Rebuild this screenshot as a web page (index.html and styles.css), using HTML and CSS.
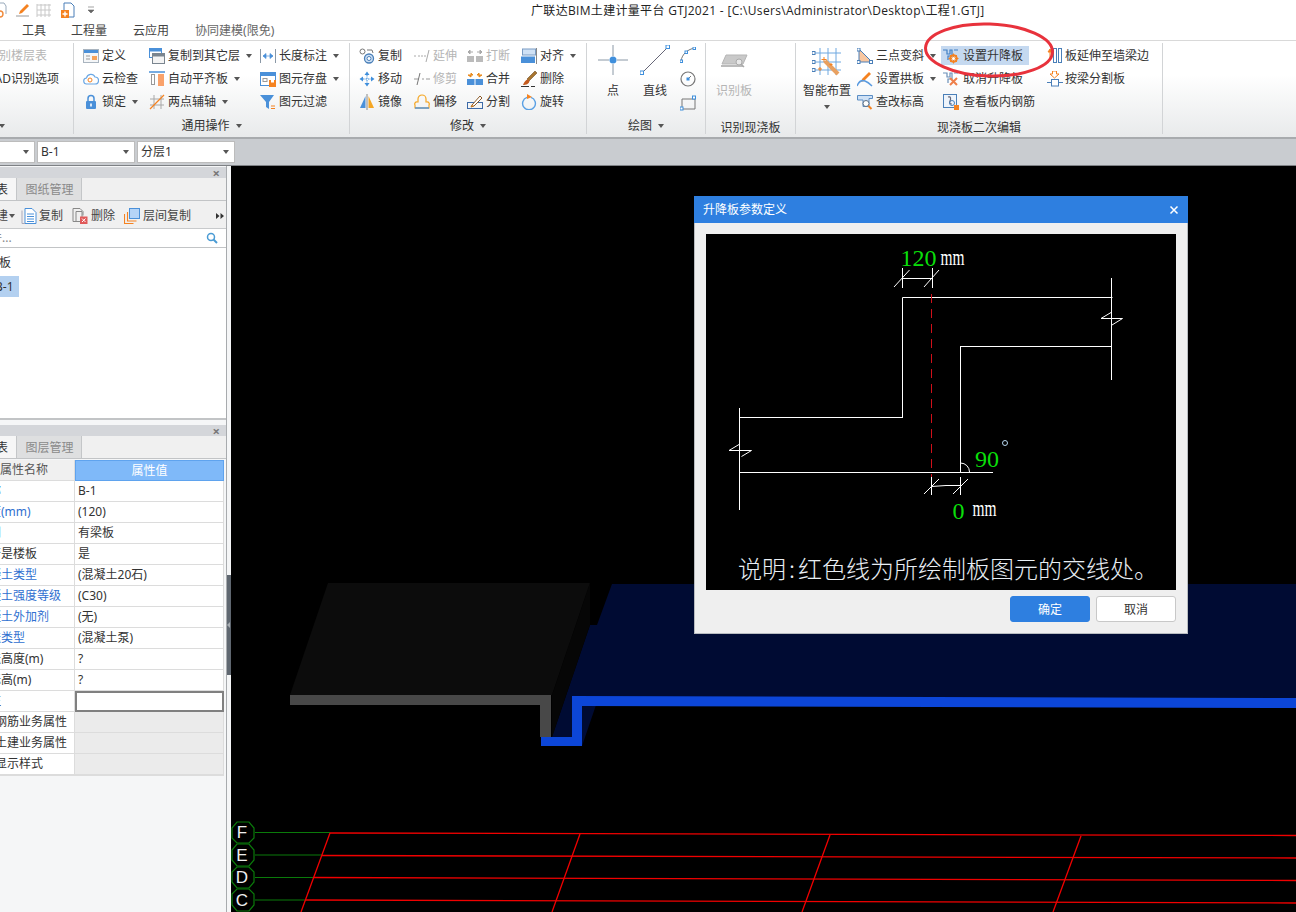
FILE: index.html
```html
<!DOCTYPE html>
<html lang="zh-CN">
<head>
<meta charset="utf-8">
<title>广联达BIM土建计量平台 GTJ2021</title>
<link rel="stylesheet" href="styles.css">
</head>
<body>
<div class="app">
  <header class="titlebar">
    <div class="quick">
      <svg class="qi qi-a" viewBox="0 0 8 16"><path d="M-3 1h7l2 3v8" fill="none" stroke="#9ab"/><circle cx="0" cy="12" r="3" fill="none" stroke="#f08a3c" stroke-width="1.4"/></svg>
      <svg class="qi" viewBox="0 0 16 16"><path d="M5 9 12 2l2 2-7 7-3 1z" fill="#f58220"/><path d="M1 14h13" stroke="#999"/></svg>
      <svg class="qi qi-w" viewBox="0 0 16 16"><path d="M1 2v13M5 2v13M9 2v13M13 2v13M1 3h14M1 8h14M1 13h14" stroke="#c8c8c8" fill="none"/></svg>
      <svg class="qi" viewBox="0 0 16 16"><path d="M4 1h7l3 3v11H4z" fill="#fff" stroke="#4a7fb8"/><rect x="1" y="8" width="8" height="8" fill="#f58220"/><path d="M5 9.5v5M2.5 12h5" stroke="#fff" stroke-width="1.4"/></svg>
      <svg class="qi qi-m" viewBox="0 0 8 8"><path d="M1 1h6M1 4h6l-3 3z" fill="#666" stroke="#666" stroke-width=".6"/></svg>
    </div>
    <div class="apptitle">广联达BIM土建计量平台 GTJ2021 - [C:\Users\Administrator\Desktop\工程1.GTJ]</div>
  </header>
  <nav class="menubar">
    <span class="menu m1">工具</span><span class="menu m2">工程量</span><span class="menu m3">云应用</span><span class="menu m4">协同建模(限免)</span>
  </nav>

  <div class="ribbon">
    <section class="group g1">
      <div class="tools col-list">
        <div class="item off">识别楼层表</div>
        <div class="item">CAD识别选项</div>
      </div>
      <div class="glabel">CAD操作<i class="caret"></i></div>
    </section>

    <section class="group g2">
      <div class="tools">
        <div class="col w66">
          <div class="item"><svg class="ic" viewBox="0 0 16 16"><rect x=".5" y="1.5" width="15" height="13" fill="#f4f6f8" stroke="#a9b4bf"/><rect x="1" y="2" width="14" height="3" fill="#4a90d9"/><path d="M3 8h4M3 11h4" stroke="#999"/><rect x="9" y="8" width="5" height="4" fill="#f5a35c"/></svg>定义</div>
          <div class="item"><svg class="ic" viewBox="0 0 16 16"><path d="M4 13a3 3 0 0 1-.5-6A4.500 4.500 0 0 1 12 6a3.500 3.500 0 0 1 0 7z" fill="none" stroke="#6aa7e4" stroke-width="1.200"/><circle cx="7" cy="9" r="2" fill="#fff" stroke="#f58220"/></svg>云检查</div>
          <div class="item"><svg class="ic" viewBox="0 0 16 16"><path d="M5 7V4.500a3 3 0 0 1 6 0V7" fill="none" stroke="#4a90d9" stroke-width="1.500"/><rect x="3" y="7" width="10" height="8" rx="1" fill="#4a90d9"/><rect x="7.200" y="9.500" width="1.600" height="3" fill="#fff"/></svg>锁定<i class="caret"></i></div>
        </div>
        <div class="col w111">
          <div class="item"><svg class="ic" viewBox="0 0 16 16"><rect x=".5" y=".5" width="12" height="9" fill="#fff" stroke="#4a90d9"/><rect x="1" y="1" width="11" height="2.500" fill="#4a90d9"/><rect x="3.500" y="5.500" width="12" height="10" fill="#f4f4f4" stroke="#7a858f"/><rect x="4" y="6" width="11" height="2.500" fill="#7a858f"/></svg>复制到其它层<i class="caret"></i></div>
          <div class="item"><svg class="ic" viewBox="0 0 16 16"><path d="M0 1h16" stroke="#4a90d9" stroke-width="1.500"/><rect x="2.500" y="3.500" width="3" height="10" fill="#fff" stroke="#999"/><rect x="9" y="3" width="6" height="12" fill="#f9a26b"/></svg>自动平齐板<i class="caret"></i></div>
          <div class="item"><svg class="ic" viewBox="0 0 16 16"><path d="M5 1v14M12 1v14M1 5h14M1 11h14" stroke="#a8a8a8" fill="none"/><path d="M1 15 15 1" stroke="#f58220" stroke-width="1.200"/></svg>两点辅轴<i class="caret"></i></div>
        </div>
        <div class="col">
          <div class="item"><svg class="ic" viewBox="0 0 16 16"><path d="M.5 1v14M15.500 1v14" stroke="#8a98a6"/><path d="M3 8h10M3 8l3-2.500v5zM13 8l-3-2.500v5z" fill="#4a90d9" stroke="#4a90d9" stroke-width=".7"/></svg>长度标注<i class="caret"></i></div>
          <div class="item"><svg class="ic" viewBox="0 0 16 16"><rect x=".5" y="1.500" width="15" height="13" fill="#fff" stroke="#4a90d9"/><rect x="1" y="2" width="14" height="3" fill="#4a90d9"/><rect x="3" y="7.500" width="4" height="3" fill="none" stroke="#999"/><rect x="9" y="9" width="7" height="7" fill="#f58220"/><rect x="11" y="9" width="3" height="2.500" fill="#fff"/></svg>图元存盘<i class="caret"></i></div>
          <div class="item"><svg class="ic" viewBox="0 0 16 16"><path d="M0 1h14L9 8v7L6 13V8z" fill="#4a90d9"/><path d="M11 12h4M11 14.500h4" stroke="#f58220"/></svg>图元过滤</div>
        </div>
      </div>
      <div class="glabel">通用操作<i class="caret"></i></div>
    </section>

    <section class="group g3">
      <div class="tools">
        <div class="col w55">
          <div class="item"><svg class="ic" viewBox="0 0 16 16"><circle cx="3.500" cy="3.500" r="2.500" fill="none" stroke="#777"/><circle cx="10" cy="10.500" r="4.500" fill="#cfe1f5" stroke="#4a7fb8" stroke-width="1.300"/><circle cx="10" cy="10.500" r="2" fill="#fff" stroke="#4a7fb8"/><path d="M8 2h5l1 3" fill="none" stroke="#777"/></svg>复制</div>
          <div class="item"><svg class="ic" viewBox="0 0 16 16"><path d="M8 .5 10.500 4h-5zM8 15.500 5.500 12h5zM.5 8 4 5.500v5zM15.500 8 12 5.500v5z" fill="#3f8fdc"/><path d="M8 4v8M4 8h8" stroke="#3f8fdc" stroke-dasharray="1.500 1"/></svg>移动</div>
          <div class="item"><svg class="ic" viewBox="0 0 16 16"><path d="M6.500 2v12H1z" fill="#4a90d9"/><path d="M9.500 2v12H15z" fill="#f5a623"/><path d="M8 0v16" stroke="#888"/></svg>镜像</div>
        </div>
        <div class="col w53">
          <div class="item off"><svg class="ic ic-off" viewBox="0 0 16 16"><path d="M0 8h2M4 8h2M7 8h2M10 8h2" stroke="#aaa"/><path d="M12 14 15 2" stroke="#aaa"/></svg>延伸</div>
          <div class="item off"><svg class="ic ic-off" viewBox="0 0 16 16"><path d="M0 8h5M8 8h2M12 8h2M14 8h2" stroke="#999"/><path d="M3 14 6 2" stroke="#777"/></svg>修剪</div>
          <div class="item"><svg class="ic" viewBox="0 0 16 16"><path d="M1 14v-3a2 2 0 0 1 2-3h1V5a4 4 0 0 1 8 0v3h1a2 2 0 0 1 2 3v3z" fill="none" stroke="#f5a623" stroke-width="1.200"/><path d="M1 14h14" stroke="#4a90d9" stroke-width="1.400"/></svg>偏移</div>
        </div>
        <div class="col w54">
          <div class="item off"><svg class="ic ic-off" viewBox="0 0 16 16"><rect x="0" y="8" width="7" height="6" fill="#bbb"/><rect x="9" y="8" width="7" height="6" fill="#bbb"/><path d="M1 4h5M15 4h-5M1 4l2-2v4zM15 4l-2-2v4z" fill="#aaa" stroke="#aaa"/></svg>打断</div>
          <div class="item"><svg class="ic" viewBox="0 0 16 16"><rect x="0" y="8" width="7.500" height="6" fill="#4a90d9"/><rect x="8.500" y="8" width="7.500" height="6" fill="#4a90d9"/><path d="M1 4h5l-2-2v4zM15 4h-5l2-2v4z" fill="#e8891a" stroke="#e8891a"/></svg>合并</div>
          <div class="item"><svg class="ic" viewBox="0 0 16 16"><rect x=".5" y="8.500" width="15" height="6" fill="none" stroke="#3c6aa8"/><path d="M5 11 13 2l2 2-8 8-3 1z" fill="#fff" stroke="#8a5a2a"/><path d="M4 13l3-1-2-1z" fill="#e8891a"/></svg>分割</div>
        </div>
        <div class="col">
          <div class="item"><svg class="ic" viewBox="0 0 16 16"><rect x="1.500" y="1" width="13" height="6" fill="#cfe1f5" stroke="#7a9cc4"/><rect x="0" y="8.500" width="14" height="6.500" fill="#4a90d9"/><path d="M15.500 0v16" stroke="#888"/></svg>对齐<i class="caret"></i></div>
          <div class="item"><svg class="ic" viewBox="0 0 16 16"><path d="M6 8 14 0l2 2-8 8z" fill="#a8742e" stroke="#5a3a12" stroke-width=".5"/><path d="M7 8.500 8.500 10C8 13 5 14 2 14c1-2 2-5 5-5.500z" fill="#c45a1e"/><path d="M0 15.500h8M10 15.500h4" stroke="#333"/></svg>删除</div>
          <div class="item"><svg class="ic" viewBox="0 0 16 16"><path d="M6 3.300A6.400 6.400 0 1 0 10 3.300" fill="none" stroke="#5aa0e4" stroke-width="1.400"/><path d="M6 0v5l5-2z" fill="#f58220"/></svg>旋转</div>
        </div>
      </div>
      <div class="glabel">修改<i class="caret"></i></div>
    </section>

    <section class="group g4">
      <div class="tools">
        <div class="big big-pt">
          <svg class="ic-big" viewBox="0 0 30 30"><path d="M15 0v11M15 19v11M0 15h11M19 15h11" stroke="#8a98a6"/><circle cx="15" cy="15" r="3.500" fill="#3f8fdc"/></svg>
          <span>点</span>
        </div>
        <div class="big big-ln">
          <svg class="ic-big" viewBox="0 0 30 30"><path d="M2 28 28 2" stroke="#667"/><rect x="0" y="26" width="3.500" height="3.500" fill="#fff" stroke="#3f8fdc"/><rect x="26" y="0" width="3.500" height="3.500" fill="#fff" stroke="#3f8fdc"/></svg>
          <span>直线</span>
        </div>
        <div class="minis">
          <svg class="ic" viewBox="0 0 16 16"><path d="M1 14C2 7 8 2 15 1" fill="none" stroke="#777"/><rect x="0" y="13" width="2.500" height="2.500" fill="#fff" stroke="#3f8fdc"/><rect x="5" y="4" width="2.500" height="2.500" fill="#fff" stroke="#3f8fdc"/><rect x="13" y="0" width="2.500" height="2.500" fill="#fff" stroke="#3f8fdc"/></svg>
          <svg class="ic" viewBox="0 0 16 16"><circle cx="8" cy="8" r="7" fill="none" stroke="#777" stroke-width="1.200"/><path d="M8 8l3-3" stroke="#777"/><rect x="6.500" y="6.500" width="3" height="3" fill="#3f8fdc"/></svg>
          <svg class="ic" viewBox="0 0 16 16"><path d="M2 4h13v10H2z" fill="none" stroke="#777"/><rect x="0" y="12" width="3" height="3" fill="#fff" stroke="#3f8fdc"/><rect x="12.500" y="1" width="3" height="3" fill="#fff" stroke="#3f8fdc"/></svg>
        </div>
      </div>
      <div class="glabel">绘图<i class="caret"></i></div>
    </section>

    <section class="group g5">
      <div class="tools">
        <div class="big big-id off">
          <svg class="ic-wide" viewBox="0 0 28 16"><path d="M6 1h21l-4 9H2z" fill="#c9c9c9" stroke="#b5b5b5"/><path d="M1 12h22" stroke="#bbb" stroke-width="2"/><circle cx="19" cy="8" r="3" fill="#e8e8e8" stroke="#aaa"/><path d="M21 10l3 3" stroke="#aaa" stroke-width="1.500"/></svg>
          <span>识别板</span>
        </div>
      </div>
      <div class="glabel glabel-low">识别现浇板</div>
    </section>

    <section class="group g6">
      <div class="tools">
        <div class="big big-sm">
          <svg class="ic-big ic-smart" viewBox="0 0 30 30"><path d="M8 1v27M16 1v27M24 1v27M1 6h28M1 15h28M1 23h28" stroke="#6fa8e0" fill="none"/><rect x="0" y="4.500" width="3" height="3" fill="#fff" stroke="#4a7fb8"/><rect x="0" y="13.500" width="3" height="3" fill="#fff" stroke="#4a7fb8"/><rect x="0" y="21.500" width="3" height="3" fill="#fff" stroke="#4a7fb8"/><path d="M13 14 26 27" stroke="#e8a060" stroke-width="4"/><path d="M12 10v5M9.500 12.500h5M8 20v4M6 22h4M19 16v3M17.500 17.500h3" stroke="#f58220"/></svg>
          <span>智能布置</span>
          <i class="caret caret-big"></i>
        </div>
        <div class="col w86">
          <div class="item"><svg class="ic" viewBox="0 0 16 16"><path d="M2 1v13h13z" fill="#f9c7a0" stroke="#4a7fb8"/><rect x="0" y="0" width="3" height="3" fill="#fff" stroke="#4a7fb8"/><rect x="0" y="12.500" width="3" height="3" fill="#fff" stroke="#4a7fb8"/><rect x="12.500" y="12.500" width="3" height="3" fill="#fff" stroke="#4a7fb8"/></svg>三点变斜<i class="caret"></i></div>
          <div class="item"><svg class="ic" viewBox="0 0 16 16"><path d="M5 8 12 1l2 2-7 7-3 1z" fill="#f58220"/><path d="M0 15c2-5 5-6 8-5s5 3 7 5" fill="none" stroke="#5a9be0" stroke-width="1.500"/></svg>设置拱板<i class="caret"></i></div>
          <div class="item"><svg class="ic" viewBox="0 0 16 16"><path d="M.5 1.500h15v3H12v8H6V6H.5z" fill="#cfe1f5" stroke="#5a8cc4"/><circle cx="9" cy="9.500" r="3" fill="#fff" stroke="#5a6e84"/><path d="M11.500 12l3 3" stroke="#f58220" stroke-width="2"/></svg>查改标高</div>
        </div>
        <div class="col w104">
          <div class="item item-on"><svg class="ic" viewBox="0 0 16 16"><path d="M0 2h4v4h3V2h2v6H5V12M11 2h4" fill="none" stroke="#3f7fc4" stroke-width="1.200"/><circle cx="10.500" cy="10.500" r="3.300" fill="none" stroke="#f58220" stroke-width="2"/><path d="M10.500 5.500v10M5.500 10.500h10M7 7l7 7M14 7l-7 7" stroke="#f58220"/><circle cx="10.500" cy="10.500" r="1.500" fill="#fff"/></svg>设置升降板</div>
          <div class="item"><svg class="ic" viewBox="0 0 16 16"><path d="M0 2h4v4h3V2h2v6H5V12M11 2h4" fill="none" stroke="#6a8fb8" stroke-width="1.200"/><path d="M7 7l7 7M14 7l-7 7" stroke="#ee7f4a" stroke-width="2"/></svg>取消升降板</div>
          <div class="item"><svg class="ic" viewBox="0 0 16 16"><rect x=".5" y=".5" width="13" height="13" fill="#eef4fb" stroke="#4a7fb8"/><path d="M5 3c3-1 3 2 2 4s0 3 2 3" fill="none" stroke="#667" stroke-width="1.200"/><circle cx="9" cy="9" r="2.500" fill="none" stroke="#4a7fb8"/><rect x="11" y="11" width="5" height="5" fill="#f58220"/></svg>查看板内钢筋</div>
        </div>
        <div class="col">
          <div class="item"><svg class="ic" viewBox="0 0 16 16"><rect x="6.500" y=".5" width="3" height="14" fill="#fff" stroke="#4a7fb8"/><rect x="11.500" y=".5" width="3" height="14" fill="#fff" stroke="#4a7fb8"/><path d="M3 10V2M1 4l2-3 2 3z" fill="#f58220" stroke="#f58220"/></svg>板延伸至墙梁边</div>
          <div class="item"><svg class="ic" viewBox="0 0 16 16"><path d="M5.500 0h4v3H12L7.500 7 3 3h2.500z" fill="#fff" stroke="#f58220"/><rect x="4.500" y="8.500" width="7" height="6.500" fill="#fff" stroke="#4a7fb8"/><path d="M0 11.500h4M12 11.500h4" stroke="#4a7fb8"/></svg>按梁分割板</div>
        </div>
      </div>
      <div class="glabel glabel-low">现浇板二次编辑</div>
    </section>

    <svg class="ring" viewBox="0 0 132 58"><ellipse cx="66" cy="29" rx="63.500" ry="26" fill="none" stroke="#e8323c" stroke-width="3" transform="rotate(2 66 29)"/></svg>
  </div>

  <div class="selectbar">
    <div class="sel sel-a"><i class="caret"></i></div>
    <div class="sel">B-1<i class="caret"></i></div>
    <div class="sel">分层1<i class="caret"></i></div>
  </div>

  <main class="work">
    <aside class="side">
      <div class="panel panel-top">
        <div class="phead"><span class="pclose">×</span></div>
        <div class="tabs"><span class="tab tab-on">构件列表</span><span class="tab">图纸管理</span></div>
        <div class="ptools">
          <span class="pt pt-new">新建<i class="caret"></i></span>
          <span class="pt pt-copy"><svg class="ic" viewBox="0 0 16 16"><path d="M4 .5h7l4 4v11H4z" fill="#fff" stroke="#4a90d9"/><path d="M1 2.500v13h3" fill="none" stroke="#aab"/><path d="M6 6h7M6 8.500h7M6 11h7M6 13.500h7" stroke="#4a90d9"/></svg>复制</span>
          <span class="pt pt-del"><svg class="ic" viewBox="0 0 16 16"><path d="M1 .5h7l3 3v4M1 .5v13h5" fill="none" stroke="#888"/><path d="M4 3.500h6v10H4z" fill="none" stroke="#888"/><rect x="8" y="8.500" width="7.500" height="7.500" fill="#e05a5a"/><path d="M10 10.500l3.500 3.500M13.500 10.500 10 14" stroke="#fff"/></svg>删除</span>
          <span class="pt pt-floor"><svg class="ic" viewBox="0 0 16 16"><rect x="5.500" y=".5" width="10" height="10" fill="#b5d4f7" stroke="#4a90d9"/><path d="M3.500 4v9h9M.5 6v9.500h9" fill="none" stroke="#f58220" stroke-width="1.100"/></svg>层间复制</span>
          <svg class="pmore" viewBox="0 0 8 6"><path d="M0 0 3.500 3 0 6zM4.500 0 8 3 4.500 6z" fill="#333"/></svg>
        </div>
        <div class="psearch"><span class="ph">搜索构件...</span><svg class="ic-s" viewBox="0 0 12 12"><circle cx="5" cy="5" r="3.500" fill="none" stroke="#4a9bd4" stroke-width="1.500"/><path d="M7.500 7.500 11 11" stroke="#4a9bd4" stroke-width="2"/></svg></div>
        <div class="plist">
          <div class="li">现浇板</div>
          <div class="li li-on">B-1</div>
        </div>
      </div>
      <div class="panel panel-bot">
        <div class="phead"><span class="pclose">×</span></div>
        <div class="tabs"><span class="tab tab-on">属性列表</span><span class="tab">图层管理</span></div>
        <div class="ptable">
          <div class="tr thead"><div class="name">属性名称</div><div class="val">属性值</div></div>
          <div class="tr"><div class="name link">名称</div><div class="val">B-1</div></div>
          <div class="tr"><div class="name link">厚度(mm)</div><div class="val">(120)</div></div>
          <div class="tr"><div class="name link">类别</div><div class="val">有梁板</div></div>
          <div class="tr"><div class="name">是否是楼板</div><div class="val">是</div></div>
          <div class="tr"><div class="name link">混凝土类型</div><div class="val">(混凝土20石)</div></div>
          <div class="tr"><div class="name link">混凝土强度等级</div><div class="val">(C30)</div></div>
          <div class="tr"><div class="name link">混凝土外加剂</div><div class="val">(无)</div></div>
          <div class="tr"><div class="name link">泵送类型</div><div class="val">(混凝土泵)</div></div>
          <div class="tr"><div class="name">泵送高度(m)</div><div class="val">?</div></div>
          <div class="tr"><div class="name">顶标高(m)</div><div class="val">?</div></div>
          <div class="tr"><div class="name">备注</div><div class="val val-edit"></div></div>
          <div class="tr"><div class="name name-sec">钢筋业务属性</div><div class="val val-sec"></div></div>
          <div class="tr"><div class="name name-sec">土建业务属性</div><div class="val val-sec"></div></div>
          <div class="tr"><div class="name name-sec">显示样式</div><div class="val val-sec"></div></div>
        </div>
      </div>
    </aside>
    <div class="splitter"><div class="grip"><i class="grip-arrow"></i></div></div>
    <div class="canvas">
      <svg class="scene" viewBox="231 166 1065 746">
        <polygon points="612,584 1296,584 1296,705 596,705 582,746 552,737 590,625 597,625" fill="#000b33"/>
        <polygon points="328,583 590,583 552,695 290,695" fill="#0c0c0c"/>
        <polygon points="590,583 590,625 552,737 552,695" fill="#060606"/>
        <polygon points="290,695 551,695 551,737 540,737 540,705 290,705" fill="#484848"/>
        <polygon points="541,737 572,737 572,696 1296,698 1296,708 582,706 582,746 541,746" fill="#0c46d8"/>
        <g class="grid-green">
          <path d="M255 832.500H330M255 855H322M255 877.500H313M255 900H305"/>
          <polygon points="237,822 249,822 254,828 254,838 249,843 237,843 232,838 232,828"/>
          <polygon points="237,844 249,844 254,850 254,860 249,866 237,866 232,860 232,850"/>
          <polygon points="237,867 249,867 254,872 254,882 249,888 237,888 232,882 232,872"/>
          <polygon points="237,889 249,889 254,894 254,905 249,911 237,911 232,905 232,894"/>
        </g>
        <g class="grid-red">
          <path d="M330 833 1296 835.500M322 855.500 1296 858M313 877.500 1296 880.500M305 900 1296 903"/>
          <path d="M330 833 301 912M580 834 552 912M830 835 802 912M1081 836 1053 912"/>
        </g>
        <g class="axis">
          <text x="242" y="838">F</text>
          <text x="242" y="861">E</text>
          <text x="242" y="883">D</text>
          <text x="242" y="906">C</text>
        </g>
      </svg>
      <div class="dialog">
        <div class="dlg-title"><span>升降板参数定义</span><svg class="dlg-x" viewBox="0 0 10 10"><path d="M1.500 1.500l7 7M8.500 1.500l-7 7" stroke="#fff" stroke-width="1.500"/></svg></div>
        <svg class="diagram" viewBox="0 0 470 356">
          <g class="lines">
            <path d="M196.500 63.500H406.500M196.500 63.500V184M33.500 183.500H196.500M33.500 174V276M33.500 238.500H287M254.500 112V238.500M254.500 112.500H406M405.500 44V146"/>
            <path d="M196.500 34V54M226.500 34V54M196.500 44.500H226.500M188 53 203.500 36M218 53 233 36"/>
            <path d="M225.500 243V261M254.500 243V261M225.500 252.500 240 251.500H254.500M218 260 233 245M247 260 262 245"/>
            <path d="M254.500 229A9 9 0 0 1 263.500 238"/>
            <path d="M405 78.500 395 84.500H416.500L406 91"/>
            <path d="M33 210.500 23 216.500H45.500L35.500 222.500"/>
          </g>
          <path class="redline" d="M225.500 60V243"/>
          <text class="dg dg-big" x="194.500" y="32">120</text>
          <text class="dg dg-mm" x="234.500" y="31" textLength="24" lengthAdjust="spacingAndGlyphs">mm</text>
          <text class="dg dg-big" x="269" y="233">90</text>
          <circle class="deg" cx="299" cy="209" r="2.500"/>
          <text class="dg dg-big" x="246.500" y="285">0</text>
          <text class="dg dg-mm" x="266.500" y="282" textLength="24" lengthAdjust="spacingAndGlyphs">mm</text>
          <text class="note" x="32" y="344">说明<tspan dx="3">:</tspan><tspan dx="3">红色线为所绘制板图元的交线处。</tspan></text>
        </svg>
        <div class="dlg-foot">
          <button class="btn btn-ok" type="button">确定</button>
          <button class="btn" type="button">取消</button>
        </div>
      </div>
    </div>
  </main>
</div>
</body>
</html>
```
FILE: styles.css
```css
* { box-sizing: border-box; }
html, body { margin: 0; padding: 0; }
body {
  width: 1296px;
  height: 912px;
  overflow: hidden;
  font-family: "Noto Sans", "Noto Sans CJK SC", sans-serif;
  font-size: 12px;
  line-height: 16px;
  color: #333;
  background: #fff;
}
.app { display: flex; flex-direction: column; width: 1296px; height: 912px; overflow: hidden; }

/* title */
.titlebar { height: 19px; display: flex; background: #fff; flex: none; }
.quick { display: flex; align-items: center; width: 260px; }
.qi { width: 16px; height: 16px; display: block; margin-right: 5px; }
.qi-a { width: 8px; margin-right: 7px; }
.qi-w { margin-right: 8px; }
.qi-m { width: 8px; height: 8px; margin-left: 6px; }
.apptitle { margin-left: 271px; white-space: nowrap; color: #222; line-height: 20px; font-size: 12px; letter-spacing: .32px; font-family: "Open Sans", "Noto Sans CJK SC", sans-serif; padding-top: 1px; }

/* menu */
.menubar { height: 22px; display: flex; align-items: center; padding-top: 3px; background: #fff; border-bottom: 1px solid #d9d9d9; flex: none; color: #444; }
.menu { white-space: nowrap; }
.m1 { margin-left: 22px; }
.m2 { margin-left: 25px; }
.m3 { margin-left: 26px; }
.m4 { margin-left: 26px; color: #666; }

/* ribbon */
.ribbon {
  position: relative;
  height: 98px;
  flex: none;
  display: flex;
  padding: 2px 0 3px;
  background: linear-gradient(#fff 35%, #e8eaeb);
  border-bottom: 2px solid #a8abae;
}
.group { display: flex; flex-direction: column; flex: none; border-right: 1px solid #d2d4d6; }
.tools { flex: 1; display: flex; padding-top: 1px; min-height: 0; }
.glabel { height: 24px; margin-bottom: -4px; display: flex; flex: none; justify-content: center; align-items: center; white-space: nowrap; color: #333; }
.glabel-low { padding-top: 4px; }
.col-list { flex-direction: column; }
.col { display: flex; flex-direction: column; flex: none; }
.item { height: 23px; display: flex; align-items: center; white-space: nowrap; flex: none; }
.off { color: #b5b5b5; }
.ic { width: 16px; height: 16px; display: block; margin-right: 3px; flex: none; }
.caret { display: inline-block; width: 0; height: 0; border: 3px solid transparent; border-top: 4px solid #555; border-bottom: 0; margin-left: 6px; flex: none; }

.g1 { width: 197px; margin-left: -123px; }
.g1 .tools { padding-left: 110px; }
.g2 { width: 276px; }
.g2 .tools { padding-left: 9px; }
.g3 { width: 237px; }
.g3 .tools { padding-left: 9px; }
.g4 { width: 119px; }
.g5 { width: 90px; }
.g6 { width: 367px; }
.g6 .tools { padding-left: 7px; }
.w53 { width: 53px; }
.w54 { width: 54px; }
.w55 { width: 55px; }
.w66 { width: 66px; }
.w86 { width: 86px; }
.w104 { width: 104px; }
.w111 { width: 111px; }

.big { display: flex; flex-direction: column; align-items: center; flex: none; padding-top: 1px; }
.big span { white-space: nowrap; margin-top: 8px; line-height: 16px; }
.big-id span { margin-top: 4px; }
.ic-big { width: 30px; height: 30px; display: block; flex: none; }
.ic-wide { width: 28px; height: 16px; display: block; margin-top: 9px; margin-bottom: 9px; flex: none; }
.big-pt { width: 30px; margin-left: 11px; }
.big-ln { width: 30px; margin-left: 12px; }
.minis { display: flex; flex-direction: column; gap: 8px; margin: 3px 0 0 10px; }
.minis .ic { margin: 0; }
.big-id { margin-left: 10px; }
.big-sm { width: 54px; padding-right: 6px; }
.ic-smart { margin-top: 2px; }
.big-sm span { margin-top: 6px; }
.caret-big { margin: 6px 0 0; }
.item-on { background: #c5d9f0; margin-left: -2px; padding-left: 2px; width: 88px; height: 19px; margin-top: 2px; margin-bottom: 2px; }
.item-on .ic { margin-right: 4px; }
.w104 .item:not(.item-on) .ic { margin-right: 4px; }
.g6 .col:last-child .ic { margin-right: 2px; }
.ring { position: absolute; left: 923px; top: -20px; width: 132px; height: 58px; pointer-events: none; overflow: visible; }

/* select row */
.selectbar { height: 27px; flex: none; display: flex; gap: 2px; padding: 2px 0 0; background: #c9ccd0; border-bottom: 1px solid #7e8185; }
.sel { width: 98px; height: 22px; background: #fff; border: 1px solid #bcbcbc; display: flex; align-items: center; justify-content: space-between; padding: 0 5px 0 3px; color: #333; flex: none; }
.sel-a { margin-left: -63px; justify-content: flex-end; }

/* workspace */
.work { flex: 1; min-height: 0; display: flex; }
.side { width: 227px; flex: none; overflow: hidden; background: #f5f6f7; display: flex; flex-direction: column; border-right: 1px solid #a8abae; }
.panel { flex: none; margin-left: -64px; width: 290px; display: flex; flex-direction: column; }
.panel-top { height: 254px; padding-top: 1px; }
.panel-bot { margin-top: 5px; }
.phead { height: 11px; flex: none; background: #d4d6da; display: flex; justify-content: flex-end; align-items: center; padding-right: 6px; }
.pclose { font-size: 13px; line-height: 10px; color: #777; font-weight: 700; }
.tabs { height: 23px; flex: none; display: flex; background: #f0f0f0; border-bottom: 1px solid #c2c4c6; }
.tab { width: 65px; padding-left: 1px; text-align: center; line-height: 23px; color: #8a8a8a; background: #dedfe0; border-right: 1px solid #c4c6c8; white-space: nowrap; }
.tab-on { width: 81px; padding: 0 8px 0 24px; text-align: left; background: #f6f6f6; color: #333; border-right: 1px solid #c4c6c8; }
.ptools { height: 28px; flex: none; display: flex; align-items: center; padding-top: 2px; background: #f0f0f0; border-bottom: 1px solid #c8cacc; color: #444; }
.pt { display: flex; align-items: center; white-space: nowrap; flex: none; }
.pt .ic { margin-right: 3px; }
.pt-new { width: 85px; padding-left: 48px; }
.pt-new .caret { margin-left: 1px; }
.pt-copy { width: 51px; }
.pt-copy .ic { margin-right: 2px; }
.pt-del { width: 52px; }
.pt-floor { width: 92px; }
.pmore { width: 8px; height: 6px; display: block; flex: none; }
.psearch { height: 19px; flex: none; display: flex; align-items: center; justify-content: space-between; background: #fff; border-bottom: 1px solid #c2c4c6; padding-right: 8px; color: #888; }
.ph { margin-left: 18px; }
.ic-s { width: 12px; height: 12px; display: block; }
.plist { flex: 1; min-height: 0; background: #fff; border-bottom: 2px solid #c2c4c6; padding-top: 4px; }
.li { height: 21px; line-height: 21px; margin-top: 3px; padding-left: 45px; white-space: nowrap; color: #333; }
.li:first-child { margin-top: 0; padding-left: 39px; height: 21px; }
.li-on { width: 83px; background: #b3d0f0; margin-top: 3px; padding-left: 59px; }

.ptable { width: 288px; background: #fff; border-bottom: 1px solid #dcdcdc; margin-top: 1px; }
.tr { display: grid; grid-template-columns: 139px 149px; height: 21px; line-height: 20px; white-space: nowrap; }
.name { padding-left: 41px; border-right: 1px solid #dcdcdc; border-bottom: 1px solid #dcdcdc; overflow: hidden; color: #333; background: #fff; }
.link { color: #2f6fd0; }
.name-sec { padding-left: 59px; }
.val { padding-left: 3px; border-right: 1px solid #dcdcdc; border-bottom: 1px solid #dcdcdc; color: #333; overflow: hidden; }
.thead .name { padding-left: 64px; background: #f0f0f0; color: #555; }
.thead .val { background: #7fb9f9; color: #fff; text-align: center; padding-left: 0; border: 1px solid #5fa3ee; }
.val-edit { border: 2px solid #808080; }
.val-sec { background: #ebebeb; }

.splitter { width: 4px; flex: none; background: #f5f6f7; padding-top: 409px; }
.grip { height: 100px; background: #5f6770; display: flex; align-items: center; }
.grip-arrow { width: 0; height: 0; border: 3px solid transparent; border-right: 3px solid #a8adb2; border-left: 0; }

/* canvas */
.canvas { position: relative; flex: 1; min-width: 0; background: #000; }
.scene { display: block; width: 1065px; height: 746px; }
.grid-green path { stroke: #0a7a0a; stroke-width: 1.200; fill: none; }
.grid-green polygon { stroke: #0a7a0a; stroke-width: 1.200; fill: none; }
.grid-red path { stroke: #f00000; stroke-width: 1.300; fill: none; }
.axis text { fill: #eee; font-family: "Liberation Sans", sans-serif; font-size: 17px; text-anchor: middle; }

/* dialog */
.dialog { position: absolute; left: 463px; top: 30px; width: 494px; height: 438px; background: #efefef; border: 1px solid #b8bcc0; border-top: 0; display: flex; flex-direction: column; }
.dlg-title { height: 27px; flex: none; background: #2e7fe0; color: #fff; display: flex; align-items: center; justify-content: space-between; padding: 0 8px 0 9px; margin: 0 -1px; }
.dlg-x { width: 10px; height: 10px; display: block; margin-right: 1px; }
.diagram { display: block; width: 470px; height: 356px; background: #000; margin: 11px 0 0 11px; flex: none; }
.lines path { stroke: #fff; stroke-width: 1; fill: none; }
.redline { stroke: #d0101a; stroke-width: 1; stroke-dasharray: 9 6; fill: none; }
.dg { font-family: "Liberation Serif", serif; }
.dg-big { fill: #0ade0a; font-size: 24px; }
.dg-mm { fill: #fff; font-size: 23px; }
.deg { fill: none; stroke: #b8d8f0; stroke-width: 1; }
.note { fill: #e8eef4; font-family: "Noto Sans CJK SC", sans-serif; font-size: 24px; font-weight: 300; }
.dlg-foot { display: flex; justify-content: flex-end; gap: 6px; padding: 6px 11px 0 0; }
.btn { width: 80px; height: 26px; border: 1px solid #c8c8c8; border-radius: 3px; background: #fff; color: #333; font: inherit; padding: 1px 0 0; }
.btn-ok { background: #2e7fe0; border-color: #2e7fe0; color: #fff; }
```
